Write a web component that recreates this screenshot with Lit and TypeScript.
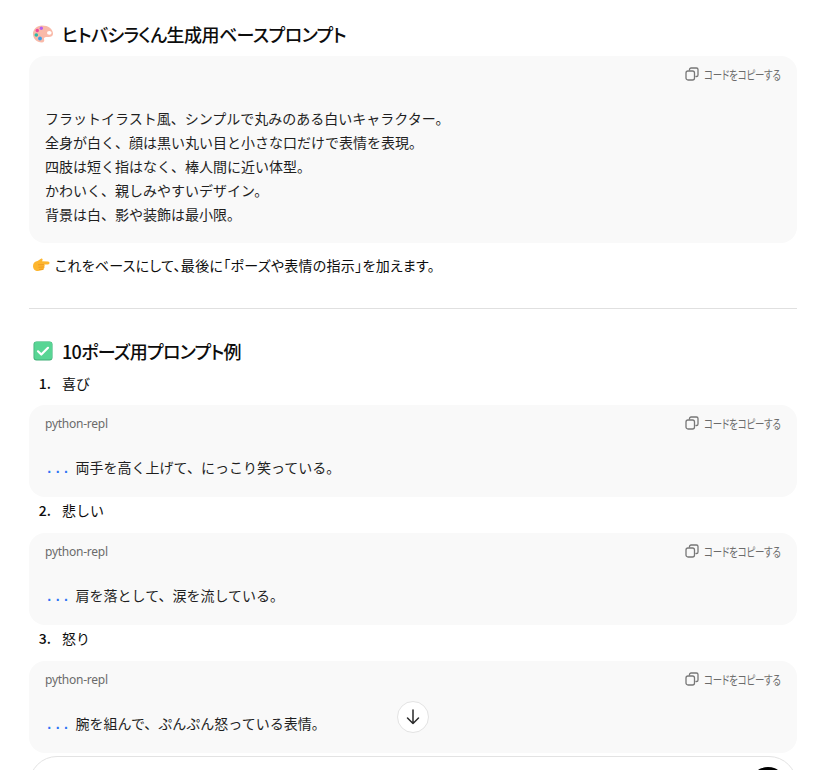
import { LitElement, html, css, svg } from "lit";
import { customElement } from "lit/decorators.js";

const palette = svg`<svg class="emoji" viewBox="0 0 22 20" width="22" height="20" aria-hidden="true">
  <path d="M10 1.500C4.800 1.500 1 5.200 1 10s3.800 8.500 8.800 8.500c2.200 0 2.800-1.300 2.300-2.900-.5-1.500.4-2.600 2-2.600h2.600c2.400 0 4.300-1.200 4.300-3.300C21 5 16.200 1.500 10 1.500z" fill="#f9b9a8"/>
  <ellipse cx="17.300" cy="8.800" rx="2.300" ry="1.900" fill="#fff"/>
  <circle cx="9.300" cy="4.300" r="1.700" fill="#b45ff0"/>
  <circle cx="5.300" cy="6.500" r="1.700" fill="#f0479b"/>
  <circle cx="4.300" cy="11" r="1.800" fill="#2fb9a6"/>
  <circle cx="8" cy="14.500" r="1.900" fill="#3e9fe6"/>
</svg>`;

const pointing = svg`<svg class="emoji" viewBox="0 0 18 14" width="18" height="14" aria-hidden="true">
  <path d="M1 8C1 5 3 3.400 5.500 3L9 .8c1-.6 2 .4 1.500 1.400l-.5 1.100 6 .3c2 .1 2 2.700 0 2.800l-3.700.2c.6.700.5 1.500 0 2 .4.700.2 1.500-.5 1.900.1.800-.4 1.500-1.200 1.600L6 13C3 13 1 11 1 8z" fill="#fdb62f"/>
  <path d="M6 6.800l6-.2M6.500 9.300l5.600-.4M7 11.500l4.300-.3" stroke="#ee9420" stroke-width=".8" fill="none"/>
</svg>`;

const check = svg`<svg class="emoji check" viewBox="0 0 20 20" width="20" height="20" aria-hidden="true">
  <rect x="0.500" y="0.500" width="19" height="19" rx="3" fill="#3fae77"/>
  <rect x="1.300" y="0.800" width="17.800" height="17.800" rx="2.500" fill="#58d594"/>
  <path d="M5 10.300l3.300 3.200 6.700-6.700" fill="none" stroke="#fff" stroke-width="2.200" stroke-linecap="round" stroke-linejoin="round"/>
</svg>`;

const copyIcon = svg`<svg class="copy-icon" viewBox="0 0 14 14" width="14" height="14" aria-hidden="true">
  <rect x="1" y="4" width="8.500" height="9" rx="2" fill="none" stroke="currentColor" stroke-width="1.300"/>
  <path d="M4.500 3V2.600A1.600 1.600 0 0 1 6.100 1h5.300A1.600 1.600 0 0 1 13 2.600v5.300a1.600 1.600 0 0 1-1.600 1.600H11" fill="none" stroke="currentColor" stroke-width="1.300" stroke-linecap="round"/>
</svg>`;

const items = [
  { n: "1.", title: "喜び", code: "両手を高く上げて、にっこり笑っている。" },
  { n: "2.", title: "悲しい", code: "肩を落として、涙を流している。" },
  { n: "3.", title: "怒り", code: "腕を組んで、ぷんぷん怒っている表情。" },
];

const baseLines = [
  "フラットイラスト風、シンプルで丸みのある白いキャラクター。",
  "全身が白く、顔は黒い丸い目と小さな口だけで表情を表現。",
  "四肢は短く指はなく、棒人間に近い体型。",
  "かわいく、親しみやすいデザイン。",
  "背景は白、影や装飾は最小限。",
];

@customElement("app-root")
export class AppRoot extends LitElement {
  static styles = css`
    :host {
      display: block;
      position: relative;
      width: 833px;
      height: 770px;
      overflow: hidden;
      background: #fff;
      color: #0d0d0d;
      font-family: "Noto Sans CJK JP", "Noto Sans", sans-serif;
      font-size: 14px;
    }
    .page {
      display: flex;
      flex-direction: column;
      padding: 22px 36px 0 29px;
    }
    h3 {
      display: flex;
      align-items: center;
      gap: 8px;
      margin: 0;
      padding-left: 3px;
      height: 24px;
      font-size: 18px;
      font-weight: 500;
      line-height: 24px;
      font-feature-settings: "palt";
      letter-spacing: -0.55px;
    }
    .second {
      margin-top: 30px;
      letter-spacing: -0.7px;
    }
    .check {
      margin: 0 1px;
    }
    .block {
      background: #f9f9f9;
      border-radius: 16px;
      padding: 0 16px;
    }
    .block-head {
      display: flex;
      align-items: center;
      justify-content: space-between;
      height: 36px;
      font-size: 12px;
      color: #6b6b6b;
    }
    .lang {
      font-family: "Noto Sans", sans-serif;
      letter-spacing: -0.25px;
    }
    .copy {
      display: flex;
      align-items: center;
      gap: 5px;
      margin-left: auto;
      font-feature-settings: "palt";
      letter-spacing: -0.3px;
    }
    .copy-label {
      display: inline-block;
      width: 77px;
      white-space: nowrap;
      transform: scaleX(0.79);
      transform-origin: left center;
    }
    .copy-icon {
      color: #777;
    }
    .code {
      line-height: 24.2px;
      color: #1f1f1f;
      white-space: pre-wrap;
    }
    .multi {
      padding: 13.5px 0 16.8px;
    }
    .single {
      padding: 14px 0 17.8px;
    }
    .dots {
      display: inline-block;
      width: 30.6px;
      line-height: 1;
      font-family: "Liberation Mono", monospace;
      font-weight: 700;
      color: #2f74f5;
      white-space: pre;
    }
    .first {
      margin-top: 10px;
    }
    .note {
      display: flex;
      align-items: center;
      gap: 5px;
      margin: 10px 0 0 3px;
      height: 24px;
      font-feature-settings: "palt";
      letter-spacing: 0.28px;
    }
    hr {
      width: 100%;
      margin: 31px 0 0;
      border: 0;
      border-top: 1px solid #e0e0e0;
    }
    .item {
      display: flex;
      align-items: center;
      height: 26px;
      margin-bottom: 10px;
    }
    .second + .item {
      margin: 7px 0 9px;
    }
    .num {
      width: 33px;
      padding-right: 11px;
      box-sizing: border-box;
      text-align: right;
      font-weight: 500;
    }
    .scroll-btn {
      position: absolute;
      left: 397px;
      top: 701px;
      width: 32px;
      height: 32px;
      box-sizing: border-box;
      border-radius: 50%;
      background: #fff;
      border: 1px solid #e3e3e3;
      display: flex;
      align-items: center;
      justify-content: center;
      color: #2a2a2a;
    }
    .composer {
      position: absolute;
      left: 29px;
      top: 756px;
      width: 768px;
      height: 80px;
      box-sizing: border-box;
      background: #fff;
      border: 1px solid #e3e3e3;
      border-radius: 28px;
    }
    .send {
      position: absolute;
      right: 10px;
      top: 10px;
      width: 36px;
      height: 36px;
      border-radius: 50%;
      background: #000;
    }
  `;

  private copy() {
    return html`<span class="copy">${copyIcon}<span class="copy-label">コードをコピーする</span></span>`;
  }

  render() {
    return html`
      <div class="page">
        <h3>${palette}<span>ヒトバシラくん生成用ベースプロンプト</span></h3>
        <div class="block first">
          <div class="block-head">${this.copy()}</div>
          <div class="code multi">${baseLines.map((l) => html`<div>${l}</div>`)}</div>
        </div>
        <div class="note">${pointing}<span>これをベースにして、最後に「ポーズや表情の指示」を加えます。</span></div>
        <hr />
        <h3 class="second">${check}<span>10ポーズ用プロンプト例</span></h3>
        ${items.map(
          (it) => html`
            <div class="item"><span class="num">${it.n}</span><span>${it.title}</span></div>
            <div class="block">
              <div class="block-head">
                <span class="lang">python-repl</span>
                ${this.copy()}
              </div>
              <div class="code single"><span class="dots">...</span>${it.code}</div>
            </div>
          `
        )}
      </div>
      <div class="scroll-btn">
        <svg viewBox="0 0 20 20" width="20" height="20" aria-hidden="true">
          <path d="M10 3v13.500M4.500 11l5.500 5.500 5.500-5.500" fill="none" stroke="currentColor" stroke-width="1.500" stroke-linecap="round" stroke-linejoin="round"/>
        </svg>
      </div>
      <div class="composer"><div class="send"></div></div>
    `;
  }
}
